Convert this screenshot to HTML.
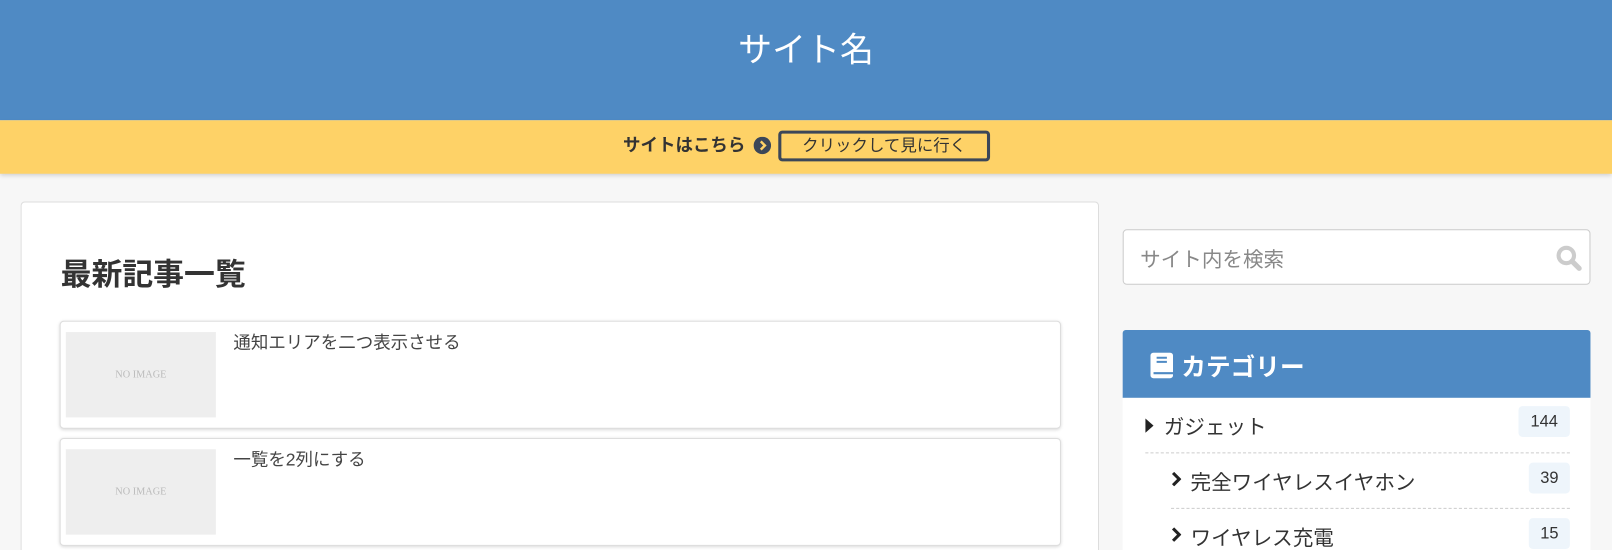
<!DOCTYPE html>
<html><head><meta charset="utf-8"><style>
*{box-sizing:border-box;margin:0;padding:0}
html,body{width:1612px;height:550px;overflow:hidden;background:#f7f7f7}
#o{position:relative;width:1612px;height:550px;overflow:hidden}
#w{position:absolute;left:0;top:0;width:1568px;height:535px;overflow:hidden;transform:scale(1.0281);transform-origin:0 0;font-family:"Liberation Sans","Noto Sans CJK JP",sans-serif;color:#333}
.hd{position:absolute;left:0;top:0;width:1568px;height:117px;background:#4f8ac4;color:#fff;text-align:center;font-size:33px;line-height:98px}
.nt{position:absolute;left:0;top:117px;width:1568px;height:52px;background:#fed267;box-shadow:0 2px 4px rgba(0,0,0,.15)}
.nt .t{position:absolute;left:606px;top:13px;font-size:17px;font-weight:bold;color:#333;line-height:24px}
.nt .b{position:absolute;left:757px;top:10px;width:206px;height:30px;border:3px solid #3c4758;border-radius:4px;font-size:16px;text-align:center;line-height:26px;color:#333}
.main{position:absolute;left:20px;top:196px;width:1049px;height:339px;background:#fff;border:1px solid #ddd;border-bottom:none;border-radius:4px 4px 0 0}
h1{position:absolute;left:38px;top:45px;font-size:30px;font-weight:bold;color:#333}
.card{position:absolute;left:37px;width:974px;height:105px;border:1px solid #ddd;border-radius:4px;box-shadow:0 1px 3px rgba(0,0,0,.15);background:#fff}
.card .im{position:absolute;left:5px;top:10px;width:146px;height:83px;background:#eee;color:#bbb;font-family:"Liberation Serif",serif;font-size:10px;text-align:center;line-height:83px}
.card .tt{position:absolute;left:168px;top:6px;font-size:17px;color:#444}
.srch{position:absolute;left:1092px;top:223px;width:455px;height:54px;background:#fff;border:1px solid #ccc;border-radius:4px}
.srch span{position:absolute;left:16px;top:12px;font-size:20px;color:#888}
.cat{position:absolute;left:1092px;top:321px;width:455px;height:66px;background:#4f8ac4;border-radius:3px 3px 0 0;color:#fff;font-size:24px;font-weight:bold}
.list{position:absolute;left:1092px;top:387px;width:455px;height:148px;background:#fff;overflow:hidden}
.li{position:absolute;font-size:20px;color:#333;white-space:nowrap}
.cnt{position:absolute;background:#eef5fb;border-radius:4px;font-size:16px;text-align:center;line-height:32px;height:30px}
.dl{position:absolute;border-top:1px dashed #ccc;height:0}
</style></head><body><div id="o"><div id="w">
<div class="hd">サイト名</div>
<div class="nt"><div class="t">サイトはこちら</div>
<svg style="position:absolute;left:733px;top:16px" width="17" height="17" viewBox="0 0 17 17"><circle cx="8.5" cy="8.5" r="8.5" fill="#3c4758"/><path d="M7 4.5l4 4-4 4" stroke="#fed267" stroke-width="2.4" fill="none"/></svg>
<div class="b">クリックして見に行く</div></div>
<div class="main"><h1>最新記事一覧</h1>
<div class="card" style="top:115px"><div class="im">NO IMAGE</div><div class="tt">通知エリアを二つ表示させる</div></div>
<div class="card" style="top:229px"><div class="im">NO IMAGE</div><div class="tt">一覧を2列にする</div></div>
</div>
<div class="srch"><span>サイト内を検索</span>
<svg style="position:absolute;left:420px;top:14px" width="26" height="26" viewBox="0 0 26 26"><circle cx="10.5" cy="10.5" r="7.5" stroke="#ccc" stroke-width="4" fill="none"/><path d="M16 16l7 7" stroke="#ccc" stroke-width="5" stroke-linecap="round"/></svg></div>
<div class="cat"><svg style="position:absolute;left:27px;top:22px" width="22" height="25" viewBox="0 0 22 25"><rect x="0" y="0" width="22" height="25" rx="3" fill="#fff"/><path d="M6 5h10M6 9h10M3 20h19" stroke="#4f8ac4" stroke-width="2"/></svg>
<span style="position:absolute;left:57px;top:16px">カテゴリー</span></div>
<div class="list">
<svg style="position:absolute;left:22px;top:20px" width="8" height="14"><path d="M0 0l8 7-8 7z" fill="#222"/></svg>
<div class="li" style="left:40px;top:12px">ガジェット</div>
<div class="cnt" style="left:385px;top:8px;width:50px">144</div>
<div class="dl" style="left:22px;top:53px;width:413px"></div>
<svg style="position:absolute;left:47px;top:72px" width="10" height="14"><path d="M2 1l6 6-6 6" stroke="#222" stroke-width="3" fill="none"/></svg>
<div class="li" style="left:66px;top:66px">完全ワイヤレスイヤホン</div>
<div class="cnt" style="left:395px;top:63px;width:40px">39</div>
<div class="dl" style="left:47px;top:107px;width:388px"></div>
<svg style="position:absolute;left:47px;top:126px" width="10" height="14"><path d="M2 1l6 6-6 6" stroke="#222" stroke-width="3" fill="none"/></svg>
<div class="li" style="left:66px;top:120px">ワイヤレス充電</div>
<div class="cnt" style="left:395px;top:117px;width:40px">15</div>
</div>
</div></div></body></html>
